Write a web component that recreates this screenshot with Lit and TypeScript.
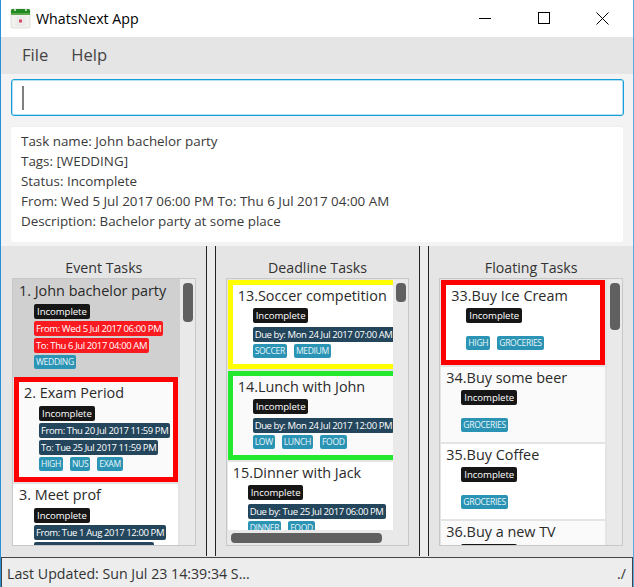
import { LitElement, html, css } from "lit";
import { customElement } from "lit/decorators.js";

type Card = {
  n: string; title: string; mark?: string; sel?: boolean; alt?: boolean; rows: { t: string; red?: boolean }[]; tags: string[]; kind: string;
};

const events: Card[] = [
  { kind: "ev", n: "1. ", title: "John bachelor party", sel: true, rows: [{ t: "From: Wed 5 Jul 2017 06:00 PM", red: true }, { t: "To: Thu 6 Jul 2017 04:00 AM", red: true }], tags: ["WEDDING"] },
  { kind: "ev", n: "2. ", title: "Exam Period", mark: "red", alt: true, rows: [{ t: "From: Thu 20 Jul 2017 11:59 PM" }, { t: "To: Tue 25 Jul 2017 11:59 PM" }], tags: ["HIGH", "NUS", "EXAM"] },
  { kind: "ev", n: "3. ", title: "Meet prof", rows: [{ t: "From: Tue 1 Aug 2017 12:00 PM" }, { t: "To: Tue 1 Aug 2017 02:00 PM" }], tags: [] },
];
const deadlines: Card[] = [
  { kind: "dl", n: "13.", title: "Soccer competition", mark: "yellow", rows: [{ t: "Due by: Mon 24 Jul 2017 07:00 AM" }], tags: ["SOCCER", "MEDIUM"] },
  { kind: "dl", n: "14.", title: "Lunch with John", mark: "green", alt: true, rows: [{ t: "Due by: Mon 24 Jul 2017 12:00 PM" }], tags: ["LOW", "LUNCH", "FOOD"] },
  { kind: "dl", n: "15.", title: "Dinner with Jack", rows: [{ t: "Due by: Tue 25 Jul 2017 06:00 PM" }], tags: ["DINNER", "FOOD"] },
];
const floating: Card[] = [
  { kind: "fl", n: "33.", title: "Buy Ice Cream", mark: "red", rows: [], tags: ["HIGH", "GROCERIES"] },
  { kind: "fl", n: "34.", title: "Buy some beer", alt: true, rows: [], tags: ["GROCERIES"] },
  { kind: "fl", n: "35.", title: "Buy Coffee", rows: [], tags: ["GROCERIES"] },
  { kind: "fl", n: "36.", title: "Buy a new TV", alt: true, rows: [], tags: [] },
];

@customElement("app-root")
export class AppRoot extends LitElement {
  static styles = css`
    :host {
      display: flex; flex-direction: column; width: 634px; height: 587px; box-sizing: border-box;
      overflow: hidden; background: #f3f3f3; border-left: 1px solid #2b90d9; border-right: 1px solid #5aa9e0;
      font-family: "Open Sans", "Noto Sans", sans-serif; color: #2b2b2b;
    }
    .titlebar { height: 37px; flex: none; background: #fff; display: flex; align-items: center; color: #000; }
    .appicon { margin-left: 9px; flex: none; }
    .apptitle { margin-left: 5px; font-size: 14.2px; flex: 1; }
    .winbtns { display: flex; padding-right: 1px; }
    .winbtn { width: 59px; height: 37px; padding-bottom: 1px; box-sizing: border-box; display: flex; align-items: center; justify-content: center; }
    .menubar { height: 37px; flex: none; background: #e5e5e5; display: flex; align-items: center; box-sizing: border-box; padding: 0 0 2px 21px; gap: 23px; font-size: 16.6px; color: #444; }
    .cmd { flex: none; padding: 5px 9px 0 10px; height: 51px; box-sizing: border-box; }
    .input { height: 37px; box-sizing: border-box; border: 1px solid #169ed9; box-shadow: 0 0 0 1px #b5e0f3 inset; border-radius: 3px; background: #fff; display: flex; align-items: center; padding-left: 10px; }
    .caret { width: 2px; height: 24px; background: #7f7f7f; }
    .result { flex: none; margin: 2px 10px 0 10px; height: 115px; box-sizing: border-box; background: #fff; border-radius: 2px; padding: 4px 10px 0; font-size: 13.4px; line-height: 20px; color: #3a3a3a; box-shadow: 0 -1px 0 #efefef; }
    .result div { white-space: nowrap; }
    .split { margin-top: 4px; height: 311px; flex: none; display: flex; background: #e5e5e5; }
    .col { flex: 1 1 0; display: flex; flex-direction: column; box-sizing: border-box; min-width: 0; padding: 0 10px 11px 11px; }
    .col.mid { padding-left: 10px; }
    .col.last { padding-left: 10px; padding-right: 10px; }
    .divider { flex: none; width: 10px; margin-bottom: 1px; box-sizing: border-box; border-left: 1px solid #222; border-right: 1px solid #222; background: #ececec; }
    .head { height: 32px; flex: none; box-sizing: border-box; padding-top: 12px; font-size: 14.2px; line-height: 20px; text-align: center; color: #333; }
    .list { position: relative; flex: 1; min-height: 0; border: 1px solid #c8c8c8; background: #e4e4e4; overflow: hidden; display: flex; flex-direction: column; gap: 2px; align-items: flex-start; }
    .mid .list, .last .list { padding: 1px 0 0 1px; }
    .vtrack { position: absolute; top: 0; right: 0; bottom: 0; width: 15px; background: #e9e9e9; }
    .mid .vtrack { bottom: 15px; }
    .vthumb { position: absolute; top: 4px; left: 3px; width: 10px; background: #606060; border-radius: 4px; }
    .htrack { position: absolute; left: 0; right: 0; bottom: 0; height: 15px; background: #e9e9e9; }
    .hthumb { position: absolute; left: 4px; top: 3px; height: 10px; width: 151px; background: #606060; border-radius: 4px; }
    .card { box-sizing: border-box; background: #fff; flex: none; padding: 0 0 7px 6px; overflow: hidden; }
    .ev { width: 165px; }
    .ev.sel { width: 167px; padding: 1px 0 8px 6px; margin-bottom: -2px; }
    .ev.marked { width: 164px; margin-left: 1px; }
    .dl { width: 178px; padding-left: 5px; }
    .fl { width: 164px; height: 75px; padding: 0 0 0 5px; }
    .fl.marked { height: 85px; }
    .card.alt { background: #fafafa; }
    .card.sel { background: #d0d0d0; }
    .card.marked { padding: 0 5px 6px 5px; border: 5px solid; }
    .dl.marked { border-right: none; height: 89px; }
    .marked.red { border-color: #ff0000; }
    .marked.yellow { border-color: #ffff00; }
    .marked.green { border-color: #24e82e; }
    .ttl { font-size: 14.4px; line-height: 22px; white-space: nowrap; color: #2a2a2a; }
    .body { display: flex; flex-direction: column; align-items: flex-start; gap: 2px; padding-left: 15px; margin-top: 2px; }
    .dl .body, .fl .body { margin-top: 1px; }
    .pill { height: 15px; flex: none; box-sizing: border-box; padding: 0 2px; border-radius: 2px; font-size: 9.5px; letter-spacing: -0.4px; line-height: 15px; white-space: nowrap; color: #fff; background: #23465c; }
    .pill.st { background: #161616; padding: 0 3px; font-size: 9.6px; letter-spacing: -0.05px; }
    .pill.redp { background: #fb1a1f; }
    .dl .st { margin-bottom: 2px; }
    .fl .st { margin-bottom: 11px; }
    .tags { display: flex; gap: 7px; flex: none; }
    .tag { height: 14px; box-sizing: border-box; padding: 0 2px; border-radius: 2px; font-size: 8.6px; letter-spacing: -0.35px; line-height: 14px; white-space: nowrap; color: #e8f6fb; background: #2b93b3; }
    .status { flex: 1; display: flex; align-items: center; justify-content: space-between; box-sizing: border-box; border: 1px solid #444; border-bottom: none; background: #ededed; padding: 1px 6px 0 5px; font-size: 14.2px; color: #333; }
  `;

  private icon() {
    return html`<svg class="appicon" width="21" height="21" viewBox="0 0 21 21">
      <rect x="1" y="1" width="19" height="19" rx="1.5" fill="#f1f1ee" stroke="#cfcfc8" stroke-width="0.6"/>
      <path d="M1 2.5 Q1 1 2.5 1 H18.5 Q20 1 20 2.5 V7 H1 Z" fill="#1f8a1f"/>
      <rect x="1" y="5" width="19" height="2" fill="#5aa84a"/>
      <circle cx="5" cy="2" r="1.1" fill="#d9e4d9"/><circle cx="16" cy="2" r="1.1" fill="#d9e4d9"/>
      <path d="M5 9.5h11M5 12h11M5 14.5h11M5 17h11M7.5 8.5v9.5M10.5 8.5v9.5M13.5 8.5v9.5" stroke="#e3e0e6" stroke-width="0.6" fill="none"/>
      <rect x="9" y="11.5" width="3" height="3" fill="#d84a62"/>
    </svg>`;
  }

  private card(c: Card) {
    const cls = ["card", c.kind, c.mark ? `marked ${c.mark}` : "", c.sel ? "sel" : "", c.alt ? "alt" : ""].join(" ");
    return html`<div class=${cls}>
      <div class="ttl">${c.n}${c.title}</div>
      <div class="body">
        <div class="pill st">Incomplete</div>
        ${c.rows.map((r) => html`<div class="pill ${r.red ? "redp" : ""}">${r.t}</div>`)}
        ${c.tags.length ? html`<div class="tags">${c.tags.map((t) => html`<div class="tag">${t}</div>`)}</div>` : ""}
      </div>
    </div>`;
  }

  render() {
    return html`
      <div class="titlebar">
        ${this.icon()}
        <div class="apptitle">WhatsNext App</div>
        <div class="winbtns">
          <div class="winbtn"><svg width="12" height="12" viewBox="0 0 12 12"><path d="M0 6.5H12" stroke="#000" fill="none"/></svg></div>
          <div class="winbtn"><svg width="12" height="12" viewBox="0 0 12 12"><rect x="0.5" y="0.5" width="11" height="11" stroke="#000" fill="none"/></svg></div>
          <div class="winbtn"><svg width="13" height="13" viewBox="0 0 13 13"><path d="M0.5 0.5L12.5 12.5M12.5 0.5L0.5 12.5" stroke="#000" fill="none"/></svg></div>
        </div>
      </div>
      <div class="menubar"><span>File</span><span>Help</span></div>
      <div class="cmd"><div class="input"><div class="caret"></div></div></div>
      <div class="result">
        <div>Task name: John bachelor party</div>
        <div>Tags: [WEDDING]</div>
        <div>Status: Incomplete</div>
        <div>From: Wed 5 Jul 2017 06:00 PM To: Thu 6 Jul 2017 04:00 AM</div>
        <div>Description: Bachelor party at some place</div>
      </div>
      <div class="split">
        <div class="col">
          <div class="head">Event Tasks</div>
          <div class="list">${events.map((c) => this.card(c))}
            <div class="vtrack"><div class="vthumb" style="height:39px"></div></div>
          </div>
        </div>
        <div class="divider"></div>
        <div class="col mid">
          <div class="head">Deadline Tasks</div>
          <div class="list">${deadlines.map((c) => this.card(c))}
            <div class="htrack"><div class="hthumb"></div></div>
            <div class="vtrack"><div class="vthumb" style="height:19px"></div></div>
          </div>
        </div>
        <div class="divider"></div>
        <div class="col last">
          <div class="head">Floating Tasks</div>
          <div class="list">${floating.map((c) => this.card(c))}
            <div class="vtrack"><div class="vthumb" style="height:47px"></div></div>
          </div>
        </div>
      </div>
      <div class="status"><span>Last Updated: Sun Jul 23 14:39:34 S...</span><span>./</span></div>
    `;
  }
}
